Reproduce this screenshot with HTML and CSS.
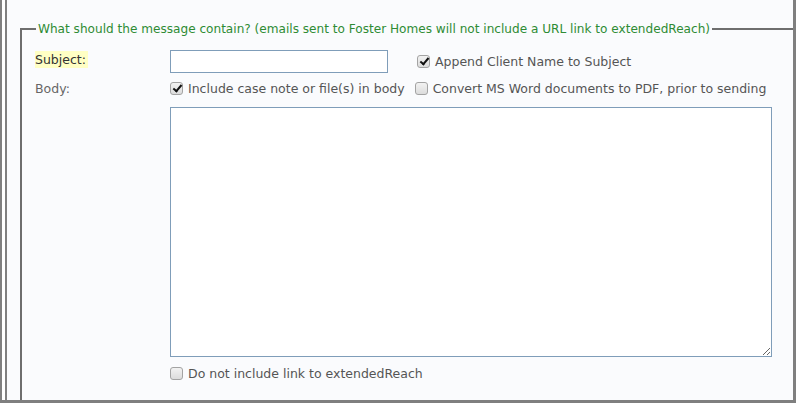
FILE: index.html
```html
<!DOCTYPE html>
<html lang="en">
<head>
    <meta charset="UTF-8">
    <title>Message contents</title>
    <link rel="stylesheet" href="styles.css">
</head>
<body>

    <div class="frame">
        <div class="topline"></div>
        <div class="pane">
            <fieldset class="group">
                <legend>What should the message contain? (emails sent to Foster Homes will not include a URL link to extendedReach)</legend>

                <div class="row">
                    <div class="caption">
                        <label class="highlight" for="subject">Subject:</label>
                    </div>
                    <input type="text" id="subject" class="subject">
                    <label class="check append">
                        <input type="checkbox" checked>
                        <span>Append Client Name to Subject</span>
                    </label>
                </div>

                <div class="row body-row">
                    <span class="caption muted">Body:</span>
                    <label class="check">
                        <input type="checkbox" checked>
                        <span>Include case note or file(s) in body</span>
                    </label>
                    <label class="check">
                        <input type="checkbox">
                        <span>Convert MS Word documents to PDF, prior to sending</span>
                    </label>
                </div>

                <div class="row">
                    <span class="caption"></span>
                    <textarea class="message"></textarea>
                </div>

                <div class="row">
                    <span class="caption"></span>
                    <label class="check">
                        <input type="checkbox">
                        <span>Do not include link to extendedReach</span>
                    </label>
                </div>
            </fieldset>
        </div>
    </div>

</body>
</html>
```

FILE: styles.css
```css
:root {
    --frame: #7f7f7f;
    --rule: #6e6e6e;
    --bg: #fafbfd;
    --text: #555;
    --legend: #2e8b34;
    --field: #7f9db9;
    --font: 'DejaVu Sans', Verdana, sans-serif;
}

* { box-sizing: border-box; }

body {
    margin: 0;
    background: #fff;
    font-family: var(--font);
    font-size: 12.5px;
    color: var(--text);
}

.frame {
    height: 403px;
    border-left: 2px solid var(--frame);
    border-right: 3px solid var(--frame);
    border-bottom: 3px solid var(--frame);
    display: flex;
    flex-direction: column;
}

.topline {
    height: 3px;
    margin-left: 18px;
    background: var(--frame);
    flex: none;
}

.pane {
    flex: 1;
    margin-left: 3px;
    margin-top: -3px;
    border-left: 2px solid var(--frame);
    background: var(--bg);
    padding: 21px 0 0 13px;
    overflow: hidden;
}

.group {
    margin: 0;
    padding: 13px 0 0 13px;
    border: none;
    border-top: 2px solid var(--rule);
    border-left: 2px solid var(--rule);
    height: 100%;
    margin-right: -10px;
}

.group legend {
    color: var(--legend);
    font-size: 12.1px;
    padding: 0 2px;
    margin-left: 1px;
    line-height: 16px;
}

.row {
    display: flex;
    align-items: center;
}

.caption {
    width: 135px;
    flex: none;
    align-self: flex-start;
}

.highlight {
    display: inline-block;
    color: #333;
    background: #ffffc4;
    margin-top: 1px;
    padding: 1px 2px 1px 0;
}

.muted {
    color: #666;
}

.subject {
    width: 218px;
    height: 23px;
    border: 1px solid var(--field);
    background: #fff;
    font: inherit;
    margin: 0;
}

.append {
    margin-left: 29px;
}

.body-row {
    margin-top: 8px;
}

.check {
    display: flex;
    align-items: center;
    gap: 5px;
    margin-right: 10px;
    white-space: nowrap;
}

.check input {
    appearance: none;
    width: 13px;
    height: 13px;
    margin: 0;
    border: 1px solid #a3a3a3;
    border-radius: 3px;
    background: linear-gradient(#f2f2f2, #dcdcdc);
    position: relative;
}

.check input:checked::after {
    content: "";
    position: absolute;
    left: 4px;
    top: 0;
    width: 3px;
    height: 7px;
    border: solid #111;
    border-width: 0 2px 2px 0;
    transform: rotate(40deg);
}

.message {
    width: 602px;
    height: 250px;
    margin: 11px 0 9px;
    border: 1px solid var(--field);
    background: #fff;
    resize: both;
    font: inherit;
}
```
